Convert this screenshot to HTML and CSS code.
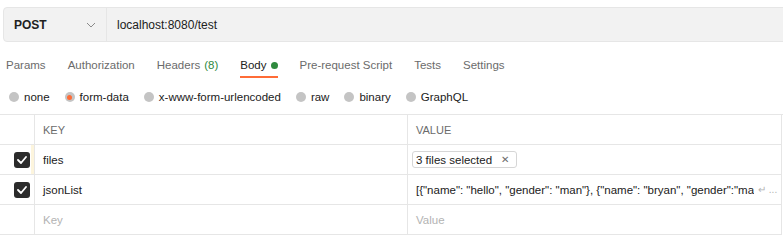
FILE: index.html
```html
<!DOCTYPE html>
<html lang="en">
  <head>
    <meta charset="UTF-8">
    <meta name="viewport" content="width=device-width, initial-scale=1.0">
    <title>Request Body</title>
    <link rel="stylesheet" href="styles.css">
  </head>
  <body>
    <div class="url-bar">
      <div class="method">
        <span class="method-name">POST</span>
        <svg class="chevron" width="10" height="6" viewBox="0 0 10 6"><path d="M1 1l4 4 4-4" fill="none" stroke="#8a8a8a" stroke-width="1"/></svg>
      </div>
      <div class="url">localhost:8080/test</div>
    </div>

    <nav class="tabs">
      <span class="tab">Params</span>
      <span class="tab">Authorization</span>
      <span class="tab">Headers <span class="count">(8)</span></span>
      <span class="tab active">Body <span class="dot"></span></span>
      <span class="tab">Pre-request Script</span>
      <span class="tab">Tests</span>
      <span class="tab">Settings</span>
    </nav>

    <div class="body-types">
      <label class="radio"><span class="circle"></span>none</label>
      <label class="radio selected"><span class="circle"></span>form-data</label>
      <label class="radio"><span class="circle"></span>x-www-form-urlencoded</label>
      <label class="radio"><span class="circle"></span>raw</label>
      <label class="radio"><span class="circle"></span>binary</label>
      <label class="radio"><span class="circle"></span>GraphQL</label>
    </div>

    <div class="params-table">
      <div class="cell check"></div>
      <div class="cell head">KEY</div>
      <div class="cell head value-col">VALUE</div>

      <div class="cell check hovered"><span class="checkbox"><svg width="10" height="8" viewBox="0 0 10 8"><path d="M1 4l3 3 5-6" fill="none" stroke="#fff" stroke-width="1.8" stroke-linecap="round" stroke-linejoin="round"/></svg></span></div>
      <div class="cell">files</div>
      <div class="cell value-col">
        <span class="file-chip">3 files selected <span class="close">&#x2715;</span></span>
      </div>

      <div class="cell check"><span class="checkbox"><svg width="10" height="8" viewBox="0 0 10 8"><path d="M1 4l3 3 5-6" fill="none" stroke="#fff" stroke-width="1.8" stroke-linecap="round" stroke-linejoin="round"/></svg></span></div>
      <div class="cell">jsonList</div>
      <div class="cell value-col json"><span class="json-text">[{"name": "hello", "gender": "man"}, {"name": "bryan", "gender":"ma</span><span class="more">&#x21B5; ...</span></div>

      <div class="cell check"></div>
      <div class="cell placeholder">Key</div>
      <div class="cell value-col placeholder">Value</div>
    </div>
  </body>
</html>
```

FILE: styles.css
```css
:root {
  --text-main: #212121;
  --text-muted: #6b6b6b;
  --text-faint: #b3b3b3;
  --border: #e6e6e6;
  --bg-input: #f2f2f2;
  --accent: #ff6c37;
  --green: #2f8a3e;
}

body {
  margin: 0;
  overflow: hidden;
  font-family: 'Liberation Sans', Arial, sans-serif;
  font-size: 11.5px;
  color: var(--text-main);
  background: #fff;
}

.url-bar {
  display: flex;
  height: 35px;
  box-sizing: border-box;
  margin: 7px -10px 0 3px;
  background: var(--bg-input);
  border: 1px solid var(--border);
  border-radius: 4px;
}

.method {
  display: flex;
  align-items: center;
  justify-content: space-between;
  width: 103px;
  padding: 0 10px 0 10px;
  box-sizing: border-box;
  border-right: 1px solid var(--border);
}

.method-name {
  font-weight: 700;
  font-size: 12px;
}

.url {
  display: flex;
  align-items: center;
  padding-left: 10px;
  font-size: 12px;
}

.tabs {
  display: flex;
  gap: 22px;
  padding: 0 6px;
  margin-top: 15px;
  height: 22px;
}

.tab {
  display: flex;
  align-items: flex-start;
  gap: 4px;
  color: var(--text-muted);
  white-space: nowrap;
  line-height: 16px;
}

.tab .count { color: var(--green); }

.tab.active {
  color: var(--text-main);
  border-bottom: 2px solid var(--accent);
  height: 19px;
}

.dot {
  width: 7px;
  height: 7px;
  margin-top: 5px;
  border-radius: 50%;
  background: var(--green);
}

.body-types {
  display: flex;
  gap: 15px;
  padding: 0 9px;
  margin-top: 9px;
  height: 26px;
  align-items: flex-start;
}

.radio {
  display: flex;
  align-items: center;
  gap: 5px;
  line-height: 18px;
}

.circle {
  width: 10px;
  height: 10px;
  border-radius: 50%;
  background: #c4c4c4;
  position: relative;
}

.radio.selected .circle::after {
  content: "";
  position: absolute;
  inset: 2.5px;
  border-radius: 50%;
  background: var(--accent);
}

.params-table {
  display: grid;
  grid-template-columns: 35px 373px 374px;
  border-top: 1px solid var(--border);
}

.cell {
  height: 29px;
  display: flex;
  align-items: center;
  padding-left: 8px;
  border-bottom: 1px solid var(--border);
  border-right: 1px solid var(--border);
  white-space: nowrap;
  overflow: hidden;
}

.cell.check {
  padding: 0 4px 0 0;
  justify-content: flex-end;
  position: relative;
}

.cell.hovered::after {
  content: "";
  position: absolute;
  right: 0;
  top: 0;
  bottom: 0;
  width: 3px;
  background: #fdf5dd;
}

.head {
  font-size: 11px;
  color: var(--text-muted);
}

.value-col { padding-left: 8px; }

.checkbox {
  display: flex;
  align-items: center;
  justify-content: center;
  width: 16px;
  height: 16px;
  border-radius: 3px;
  background: #2b2b2b;
}

.file-chip {
  display: flex;
  align-items: center;
  gap: 9px;
  height: 15px;
  padding: 0 7px 0 3px;
  margin-left: -4px;
  border: 1px solid #d6d6d6;
  border-radius: 3px;
}

.close {
  font-size: 10px;
  color: var(--text-muted);
}

.json-text {
  overflow: hidden;
  min-width: 0;
}

.more {
  flex-shrink: 0;
  margin-left: 4px;
  color: var(--text-faint);
  font-size: 10px;
}

.placeholder { color: var(--text-faint); }
```
